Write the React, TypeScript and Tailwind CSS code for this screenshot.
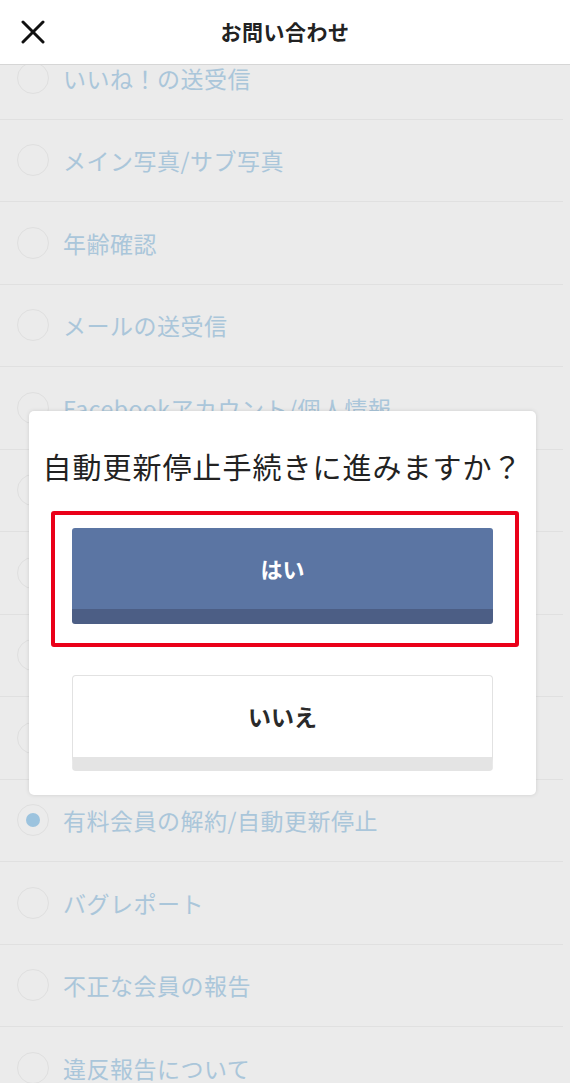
import React from 'react';

// rows 6-9 sit behind the dialog, so their labels are left blank
const topics = [
  'いいね！の送受信',
  'メイン写真/サブ写真',
  '年齢確認',
  'メールの送受信',
  'Facebookアカウント/個人情報',
  '',
  '',
  '',
  '',
  '有料会員の解約/自動更新停止',
  'バグレポート',
  '不正な会員の報告',
  '違反報告について',
];

const selected = '有料会員の解約/自動更新停止';

const font = { fontFamily: '"Noto Sans CJK JP", "Noto Sans", sans-serif' };

const Radio: React.FC<{ checked: boolean }> = ({ checked }) => (
  <span className="flex h-[32px] w-[32px] shrink-0 items-center justify-center rounded-full border-[1.5px] border-[#dfdfdf]">
    {checked && <span className="h-[14px] w-[14px] rounded-full bg-[#9cc3de]" />}
  </span>
);

const App: React.FC = () => {
  return (
    <div className="relative h-[1083px] w-[570px] overflow-hidden bg-[#ebebeb]" style={font}>
      {/* header */}
      <header className="relative z-10 flex h-[65px] items-center border-b border-[#d6d6d6] bg-white">
        <button className="ml-[21px] flex h-[24px] w-[24px] items-center justify-center">
          <svg width="24" height="24" viewBox="0 0 24 24" fill="none" stroke="#111" strokeWidth="3" strokeLinecap="round">
            <path d="M2 2 L22 22" />
            <path d="M22 2 L2 22" />
          </svg>
        </button>
        <h1 className="absolute left-0 right-0 text-center text-[21px] font-bold tracking-[0.5px] text-[#222]">
          お問い合わせ
        </h1>
      </header>

      {/* list (scrolled under the header) */}
      <div className="mt-[-28px]">
        {topics.map((t, i) => (
          <div key={i} className="mr-[7px] flex h-[82.5px] items-center border-b border-[#e0e0e0]">
            <span className="ml-[17px]">
              <Radio checked={t === selected} />
            </span>
            {t && <span className="ml-[14px] text-[23px] tracking-[0.5px] text-[#aac6da]">{t}</span>}
          </div>
        ))}
      </div>

      {/* dialog */}
      <div className="absolute left-[29px] top-[411px] w-[507px] rounded-[5px] bg-white pb-[24px] pt-[34px] shadow-[0_0_4px_rgba(0,0,0,0.12)]">
        <p className="text-center text-[29px] tracking-[1px] text-[#222]">自動更新停止手続きに進みますか？</p>
        <div className="ml-[22px] mt-[22px] w-[468px] rounded-[3px] border-4 border-[#ea0019] pb-[19px] pl-[17px] pr-[22px] pt-[13px]">
          <button className="flex h-[96px] w-full items-center justify-center rounded-[3px] border-b-[15px] border-[#4c5e85] bg-[#5b75a3] text-[22px] font-bold text-white">
            はい
          </button>
        </div>
        <div className="mx-[43px] mt-[28px]">
          <button className="flex h-[96px] w-full items-center justify-center rounded-[4px] border border-[#e2e2e2] border-b-[14px] border-b-[#e4e4e4] bg-white text-[23px] font-bold text-[#2a2a2a]">
            いいえ
          </button>
        </div>
      </div>
    </div>
  );
};

export default App;
